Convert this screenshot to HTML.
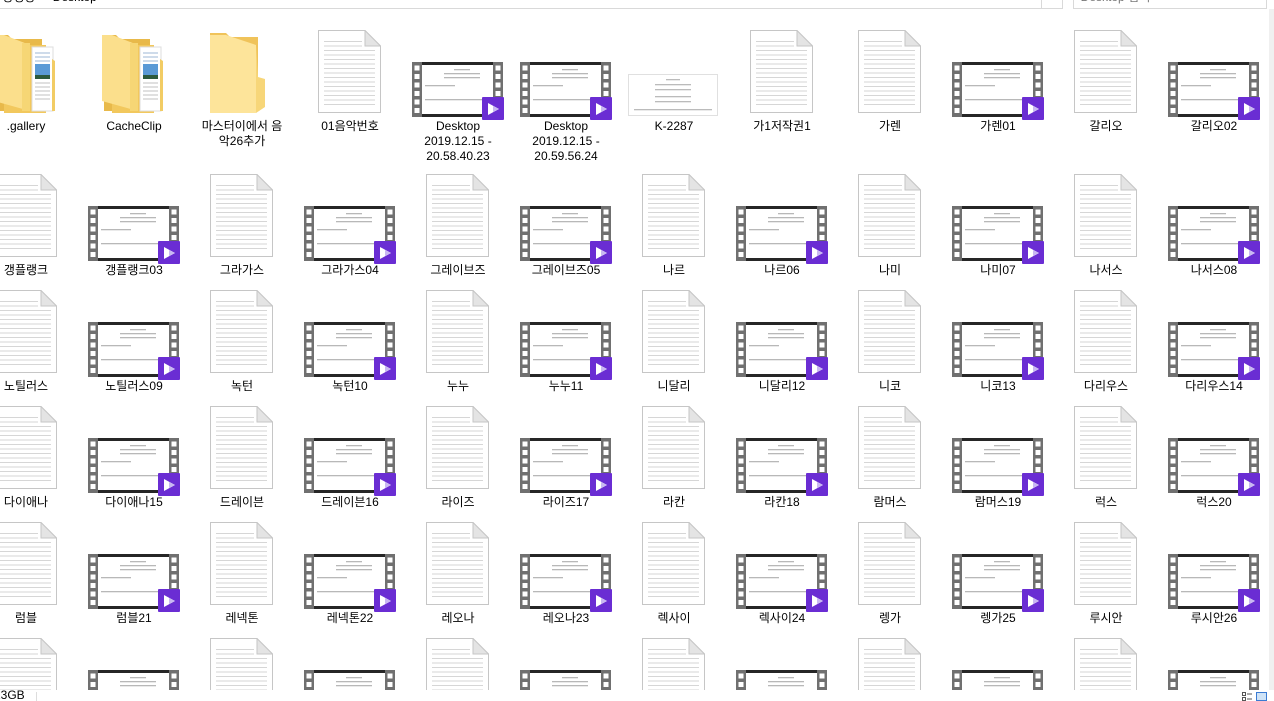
<!DOCTYPE html>
<html><head><meta charset="utf-8"><style>
html,body{margin:0;padding:0;width:1274px;height:701px;overflow:hidden;background:#fff;position:relative;font-family:"Liberation Sans","Noto Sans CJK KR",sans-serif}
.c{position:absolute;width:108px;height:110px}
.c svg{position:absolute}
.d{left:22px;top:3px;width:63px;height:83px}
.v{left:8px;top:35px;width:92px;height:58px}
.l{position:absolute;left:0;top:92px;width:108px;text-align:center;font-size:12px;line-height:15px;color:#000}
#content{position:absolute;left:0;top:9px;width:1269px;height:681px;overflow:hidden}
#inner{position:absolute;left:0;top:-9px;width:1269px;height:690px;overflow:hidden}
.r6{height:55px;overflow:hidden}
</style></head><body>
<svg width="0" height="0" style="position:absolute">
<defs>
<symbol id="doc" viewBox="0 0 63 83">
<path d="M0.5 0.5H47L62.5 16V82.5H0.5Z" fill="#fff" stroke="#c6c6c6"/>
<path d="M47 0.5V16H62.5Z" fill="#e4e4e4" stroke="#c6c6c6"/>
<g stroke="#d6d6d6" stroke-width="1">
<path d="M6 11.5H44M6 16H44M6 20.5H57M6 25H57M6 29.5H57M6 34H57M6 38.5H57M6 43H57M6 47.5H57M6 52H57M6 56.5H57M6 61H57M6 65.5H57M6 70H57M6 74.5H57"/>
</g>
</symbol>
<symbol id="vid" viewBox="0 0 92 58">
<rect x="0" y="0" width="91" height="55" fill="#707070"/>
<rect x="10" y="0" width="71" height="55" fill="#262626"/>
<rect x="10" y="3" width="71" height="49" fill="#fff"/>
<g fill="#fff"><rect x="2.5" y="3.5" width="5" height="5"/><rect x="2.5" y="12" width="5" height="5"/><rect x="2.5" y="20.5" width="5" height="5"/><rect x="2.5" y="29" width="5" height="5"/><rect x="2.5" y="37.5" width="5" height="5"/><rect x="2.5" y="46" width="5" height="5"/>
<rect x="83.5" y="3.5" width="5" height="5"/><rect x="83.5" y="12" width="5" height="5"/><rect x="83.5" y="20.5" width="5" height="5"/><rect x="83.5" y="29" width="5" height="5"/><rect x="83.5" y="37.5" width="5" height="5"/><rect x="83.5" y="46" width="5" height="5"/></g>
<g fill="#b8b8b8"><rect x="42" y="7" width="16" height="1.3"/><rect x="32" y="11" width="36" height="1.3"/><rect x="32" y="15" width="36" height="1.3"/><rect x="13" y="23" width="30" height="1.3"/><rect x="13" y="37" width="60" height="1.3"/></g>
<rect x="70" y="35" width="22" height="23" rx="1" fill="#6a2dd3"/>
<path d="M76 41L76 53L87 47Z" fill="#fff"/>
<path d="M81 44L87 47L81 50Z" fill="#c9b8f2"/>
</symbol>
<symbol id="fold" viewBox="0 0 61 80">
<path d="M2 2H14L18 6H48V78H2Z" fill="#e8b94a"/>
<path d="M10 8H22L26 12H52V80H10Z" fill="#f2c85d"/>
<rect x="38" y="14" width="21" height="64" fill="#fff" stroke="#ddd"/>
<g stroke="#9cb7d6"><path d="M41 20H56M41 24H56M41 28H56"/></g>
<rect x="41" y="31" width="15" height="14" fill="#5a9ad6"/>
<rect x="41" y="42" width="15" height="4" fill="#2c5a3e"/>
<g stroke="#c0c0c0"><path d="M41 50H56M41 54H56M41 58H56M41 62H56M41 66H56"/></g>
<path d="M0 2H10L36 12V78L0 68Z" fill="#fbdf8c"/>
<path d="M28 10H36V78H28Z" fill="#f6d675"/>
<path d="M50 78H61V28L58 26V78Z" fill="#f2cc64"/>
</symbol>
<symbol id="efold" viewBox="0 0 55 80">
<path d="M0 0H16L20 4H48V76H0Z" fill="#f0c35a"/>
<path d="M0 2H16L46 12V80H0Z" fill="#fde49a"/>
<path d="M46 12V80L55 74H55V46L48 44Z" fill="#f7d679"/>
</symbol>
</defs></svg>

<div style="position:absolute;left:-2px;top:-14px;width:1042px;height:21px;border:1px solid #d9d9d9;font-size:12px;line-height:21px;color:#000;white-space:nowrap">&nbsp;방정방 &nbsp;› &nbsp;Desktop</div>
<div style="position:absolute;left:1040px;top:-14px;width:22px;height:21px;border:1px solid #d9d9d9;border-left:none"></div>
<div style="position:absolute;left:1073px;top:-14px;width:192px;height:21px;border:1px solid #d9d9d9;font-size:12px;line-height:21px;color:#777;white-space:nowrap">&nbsp; Desktop 검색</div>
<div style="position:absolute;left:1269px;top:9px;width:5px;height:681px;background:#f0f0f0"></div>

<div id="content"><div id="inner">
<div class="c" style="left:-28px;top:27px"><svg style="left:22px;top:6px;width:61px;height:80px"><use href="#fold"/></svg><div class="l">.gallery</div></div>
<div class="c" style="left:80px;top:27px"><svg style="left:22px;top:6px;width:61px;height:80px"><use href="#fold"/></svg><div class="l">CacheClip</div></div>
<div class="c" style="left:188px;top:27px"><svg style="left:22px;top:6px;width:55px;height:80px"><use href="#efold"/></svg><div class="l">마스터이에서 음<br>악26추가</div></div>
<div class="c" style="left:296px;top:27px"><svg class="d"><use href="#doc"/></svg><div class="l">01음악번호</div></div>
<div class="c" style="left:404px;top:27px"><svg class="v"><use href="#vid"/></svg><div class="l">Desktop<br>2019.12.15 -<br>20.58.40.23</div></div>
<div class="c" style="left:512px;top:27px"><svg class="v"><use href="#vid"/></svg><div class="l">Desktop<br>2019.12.15 -<br>20.59.56.24</div></div>
<div class="c" style="left:620px;top:27px"><svg style="left:8px;top:47px;width:90px;height:42px" viewBox="0 0 90 42"><rect x="0.5" y="0.5" width="89" height="41" fill="#fff" stroke="#e0e0e0"/><g fill="#bbb"><rect x="38" y="5" width="14" height="1.3"/><rect x="27" y="10" width="36" height="1.3"/><rect x="27" y="15" width="36" height="1.3"/><rect x="27" y="22" width="36" height="1.3"/><rect x="27" y="27" width="36" height="1.3"/><rect x="6" y="35" width="78" height="1.3"/></g></svg><div class="l">K-2287</div></div>
<div class="c" style="left:728px;top:27px"><svg class="d"><use href="#doc"/></svg><div class="l">가1저작권1</div></div>
<div class="c" style="left:836px;top:27px"><svg class="d"><use href="#doc"/></svg><div class="l">가렌</div></div>
<div class="c" style="left:944px;top:27px"><svg class="v"><use href="#vid"/></svg><div class="l">가렌01</div></div>
<div class="c" style="left:1052px;top:27px"><svg class="d"><use href="#doc"/></svg><div class="l">갈리오</div></div>
<div class="c" style="left:1160px;top:27px"><svg class="v"><use href="#vid"/></svg><div class="l">갈리오02</div></div>
<div class="c" style="left:-28px;top:171px"><svg class="d"><use href="#doc"/></svg><div class="l">갱플랭크</div></div>
<div class="c" style="left:80px;top:171px"><svg class="v"><use href="#vid"/></svg><div class="l">갱플랭크03</div></div>
<div class="c" style="left:188px;top:171px"><svg class="d"><use href="#doc"/></svg><div class="l">그라가스</div></div>
<div class="c" style="left:296px;top:171px"><svg class="v"><use href="#vid"/></svg><div class="l">그라가스04</div></div>
<div class="c" style="left:404px;top:171px"><svg class="d"><use href="#doc"/></svg><div class="l">그레이브즈</div></div>
<div class="c" style="left:512px;top:171px"><svg class="v"><use href="#vid"/></svg><div class="l">그레이브즈05</div></div>
<div class="c" style="left:620px;top:171px"><svg class="d"><use href="#doc"/></svg><div class="l">나르</div></div>
<div class="c" style="left:728px;top:171px"><svg class="v"><use href="#vid"/></svg><div class="l">나르06</div></div>
<div class="c" style="left:836px;top:171px"><svg class="d"><use href="#doc"/></svg><div class="l">나미</div></div>
<div class="c" style="left:944px;top:171px"><svg class="v"><use href="#vid"/></svg><div class="l">나미07</div></div>
<div class="c" style="left:1052px;top:171px"><svg class="d"><use href="#doc"/></svg><div class="l">나서스</div></div>
<div class="c" style="left:1160px;top:171px"><svg class="v"><use href="#vid"/></svg><div class="l">나서스08</div></div>
<div class="c" style="left:-28px;top:287px"><svg class="d"><use href="#doc"/></svg><div class="l">노틸러스</div></div>
<div class="c" style="left:80px;top:287px"><svg class="v"><use href="#vid"/></svg><div class="l">노틸러스09</div></div>
<div class="c" style="left:188px;top:287px"><svg class="d"><use href="#doc"/></svg><div class="l">녹턴</div></div>
<div class="c" style="left:296px;top:287px"><svg class="v"><use href="#vid"/></svg><div class="l">녹턴10</div></div>
<div class="c" style="left:404px;top:287px"><svg class="d"><use href="#doc"/></svg><div class="l">누누</div></div>
<div class="c" style="left:512px;top:287px"><svg class="v"><use href="#vid"/></svg><div class="l">누누11</div></div>
<div class="c" style="left:620px;top:287px"><svg class="d"><use href="#doc"/></svg><div class="l">니달리</div></div>
<div class="c" style="left:728px;top:287px"><svg class="v"><use href="#vid"/></svg><div class="l">니달리12</div></div>
<div class="c" style="left:836px;top:287px"><svg class="d"><use href="#doc"/></svg><div class="l">니코</div></div>
<div class="c" style="left:944px;top:287px"><svg class="v"><use href="#vid"/></svg><div class="l">니코13</div></div>
<div class="c" style="left:1052px;top:287px"><svg class="d"><use href="#doc"/></svg><div class="l">다리우스</div></div>
<div class="c" style="left:1160px;top:287px"><svg class="v"><use href="#vid"/></svg><div class="l">다리우스14</div></div>
<div class="c" style="left:-28px;top:403px"><svg class="d"><use href="#doc"/></svg><div class="l">다이애나</div></div>
<div class="c" style="left:80px;top:403px"><svg class="v"><use href="#vid"/></svg><div class="l">다이애나15</div></div>
<div class="c" style="left:188px;top:403px"><svg class="d"><use href="#doc"/></svg><div class="l">드레이븐</div></div>
<div class="c" style="left:296px;top:403px"><svg class="v"><use href="#vid"/></svg><div class="l">드레이븐16</div></div>
<div class="c" style="left:404px;top:403px"><svg class="d"><use href="#doc"/></svg><div class="l">라이즈</div></div>
<div class="c" style="left:512px;top:403px"><svg class="v"><use href="#vid"/></svg><div class="l">라이즈17</div></div>
<div class="c" style="left:620px;top:403px"><svg class="d"><use href="#doc"/></svg><div class="l">라칸</div></div>
<div class="c" style="left:728px;top:403px"><svg class="v"><use href="#vid"/></svg><div class="l">라칸18</div></div>
<div class="c" style="left:836px;top:403px"><svg class="d"><use href="#doc"/></svg><div class="l">람머스</div></div>
<div class="c" style="left:944px;top:403px"><svg class="v"><use href="#vid"/></svg><div class="l">람머스19</div></div>
<div class="c" style="left:1052px;top:403px"><svg class="d"><use href="#doc"/></svg><div class="l">럭스</div></div>
<div class="c" style="left:1160px;top:403px"><svg class="v"><use href="#vid"/></svg><div class="l">럭스20</div></div>
<div class="c" style="left:-28px;top:519px"><svg class="d"><use href="#doc"/></svg><div class="l">럼블</div></div>
<div class="c" style="left:80px;top:519px"><svg class="v"><use href="#vid"/></svg><div class="l">럼블21</div></div>
<div class="c" style="left:188px;top:519px"><svg class="d"><use href="#doc"/></svg><div class="l">레넥톤</div></div>
<div class="c" style="left:296px;top:519px"><svg class="v"><use href="#vid"/></svg><div class="l">레넥톤22</div></div>
<div class="c" style="left:404px;top:519px"><svg class="d"><use href="#doc"/></svg><div class="l">레오나</div></div>
<div class="c" style="left:512px;top:519px"><svg class="v"><use href="#vid"/></svg><div class="l">레오나23</div></div>
<div class="c" style="left:620px;top:519px"><svg class="d"><use href="#doc"/></svg><div class="l">렉사이</div></div>
<div class="c" style="left:728px;top:519px"><svg class="v"><use href="#vid"/></svg><div class="l">렉사이24</div></div>
<div class="c" style="left:836px;top:519px"><svg class="d"><use href="#doc"/></svg><div class="l">렝가</div></div>
<div class="c" style="left:944px;top:519px"><svg class="v"><use href="#vid"/></svg><div class="l">렝가25</div></div>
<div class="c" style="left:1052px;top:519px"><svg class="d"><use href="#doc"/></svg><div class="l">루시안</div></div>
<div class="c" style="left:1160px;top:519px"><svg class="v"><use href="#vid"/></svg><div class="l">루시안26</div></div>
<div class="c r6" style="left:-28px;top:635px"><svg class="d"><use href="#doc"/></svg></div>
<div class="c r6" style="left:80px;top:635px"><svg class="v"><use href="#vid"/></svg></div>
<div class="c r6" style="left:188px;top:635px"><svg class="d"><use href="#doc"/></svg></div>
<div class="c r6" style="left:296px;top:635px"><svg class="v"><use href="#vid"/></svg></div>
<div class="c r6" style="left:404px;top:635px"><svg class="d"><use href="#doc"/></svg></div>
<div class="c r6" style="left:512px;top:635px"><svg class="v"><use href="#vid"/></svg></div>
<div class="c r6" style="left:620px;top:635px"><svg class="d"><use href="#doc"/></svg></div>
<div class="c r6" style="left:728px;top:635px"><svg class="v"><use href="#vid"/></svg></div>
<div class="c r6" style="left:836px;top:635px"><svg class="d"><use href="#doc"/></svg></div>
<div class="c r6" style="left:944px;top:635px"><svg class="v"><use href="#vid"/></svg></div>
<div class="c r6" style="left:1052px;top:635px"><svg class="d"><use href="#doc"/></svg></div>
<div class="c r6" style="left:1160px;top:635px"><svg class="v"><use href="#vid"/></svg></div>
</div></div>

<div style="position:absolute;left:-6px;top:690px;font-size:12px;line-height:11px;height:11px;overflow:hidden;color:#000;white-space:nowrap">23GB</div>
<div style="position:absolute;left:36px;top:692px;width:1px;height:9px;background:#ddd"></div>
<svg style="position:absolute;left:1242px;top:692px" width="32" height="9"><g fill="none" stroke="#555"><rect x="0.5" y="0.5" width="3" height="3"/><rect x="0.5" y="5.5" width="3" height="3"/><path d="M5 2H10M5 7H10"/></g><rect x="14.5" y="0.5" width="10" height="8" fill="#cfe3f7" stroke="#3b7bd3"/></svg>
</body></html>
